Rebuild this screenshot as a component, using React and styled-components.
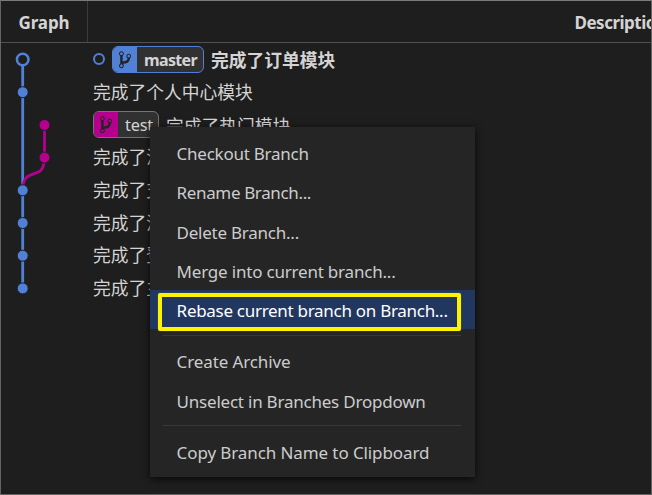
import React from 'react';
import styled, { createGlobalStyle, css } from 'styled-components';

const Global = createGlobalStyle`
  *{box-sizing:border-box}
  body{margin:0;background:#1e1e1e;overflow:hidden}
`;
const Page = styled.main`
  position:relative;width:652px;height:495px;overflow:hidden;
  background:#1e1e1e;color:#d4d4d4;border:1px solid #636463;border-top-color:#7a7c7a;
  font-family:"Noto Sans","Noto Sans CJK SC",sans-serif;font-size:17px;
`;
const Header = styled.header`
  display:flex;height:42px;border-bottom:1px solid #4f504f;font-weight:700;line-height:43px;
`;
const GraphHead = styled.div`
  width:87px;border-right:1px solid #3b3b3b;text-align:center;letter-spacing:-0.15px;
`;
const DescHead = styled.div`
  flex:1;padding-left:486.5px;white-space:nowrap;overflow:hidden;letter-spacing:-0.5px;
`;
const Body = styled.div`display:flex;`;
const Graph = styled.svg`width:92px;height:262px;flex:none;display:block;`;
const Commits = styled.div`flex:1;`;
const Commit = styled.div`
  display:flex;align-items:center;height:32.7px;white-space:nowrap;
  font-weight:${p => (p.$head ? 700 : 400)};
`;
const Message = styled.span`
  font-family:"Noto Sans CJK SC",sans-serif;font-size:17.75px;line-height:30px;
  padding-bottom:${p => (p.$raised ? 2 : 0)}px;
`;
const HeadDot = styled.span`
  width:12px;height:12px;border:2px solid #5180d7;border-radius:50%;margin-right:7px;
`;
const Ref = styled.span`
  display:flex;height:27px;width:${p => p.$w}px;margin-right:7px;overflow:hidden;
  border:1px solid ${p => p.$border};border-radius:6px;background:#313131;
`;
const RefIcon = styled.span`
  width:24px;flex:none;display:grid;place-items:center;background:${p => p.$c};color:#232323;
`;
const RefName = styled.span`
  flex:1;padding-left:7px;line-height:27px;font-size:${p => (p.$head ? 16 : 16.3)}px;letter-spacing:${p => p.$ls}px;
`;
const Menu = styled.nav`
  position:absolute;left:149px;top:126px;width:325px;height:350px;padding-top:6px;
  background:#252526;box-shadow:0 2px 8px rgba(0,0,0,.75);
`;
const Item = styled.div`
  height:39.3px;line-height:${p => p.$lh || 41}px;padding-left:26.6px;white-space:nowrap;color:#ccc;
  letter-spacing:${p => p.$ls}px;
  ${p => p.$active && css`background:#22375f;color:#fff;`}
`;
const Separator = styled.div`
  height:1px;margin:${p => p.$top}px 14px ${p => p.$bottom}px 13px;background:#383839;
`;
const Highlight = styled.div`
  position:absolute;left:8px;top:166px;width:303px;height:38px;border:4px solid #fff200;border-radius:2px;
  box-shadow:0 0 1px #b8ae00;
`;

const Branch = () => (
  <svg width="12.2" height="19.5" viewBox="0 0 10 16" fill="currentColor">
    <path fillRule="evenodd" d="M10 5c0-1.11-.89-2-2-2a1.993 1.993 0 00-1 3.72v.3c-.02.52-.23.98-.63 1.38-.4.4-.86.61-1.38.63-.83.02-1.48.16-2 .45V4.72a1.993 1.993 0 00-1-3.72C.88 1 0 1.89 0 3a2 2 0 001 1.72v6.56c-.59.35-1 .99-1 1.72 0 1.11.89 2 2 2 1.11 0 2-.89 2-2 0-.53-.2-1-.53-1.36.09-.06.48-.41.59-.47.25-.11.56-.17.94-.17 1.05-.05 1.95-.45 2.75-1.25S8.95 7.77 9 6.73h-.02C9.59 6.37 10 5.73 10 5zM2 1.8c.66 0 1.2.55 1.2 1.2 0 .65-.55 1.2-1.2 1.2C1.35 4.2.8 3.65.8 3c0-.65.55-1.2 1.2-1.2zm0 12.41c-.66 0-1.2-.55-1.2-1.2 0-.65.55-1.2 1.2-1.2.65 0 1.2.55 1.2 1.2 0 .65-.55 1.2-1.2 1.2zm6-8c-.66 0-1.2-.55-1.2-1.2 0-.65.55-1.2 1.2-1.2.65 0 1.2.55 1.2 1.2 0 .65-.55 1.2-1.2 1.2z" />
  </svg>
);

const commits = ['完成了个人中心模块', null, '完成了消息模块', '完成了支付模块', '完成了消息模块', '完成了登录模块', '完成了主页模块'];
const dots = [49.2, 147.3, 180, 212.7, 245.4];

export default function App() {
  return (
    <Page>
      <Global />
      <Header><GraphHead>Graph</GraphHead><DescHead>Description</DescHead></Header>
      <Body>
        <Graph viewBox="0 0 92 262" fill="none">
          <path d="M21.7 17V245" stroke="#5180d7" strokeWidth="2.8" />
          <path d="M43.5 82V114.6C43.5 140.8 21.7 121.1 21.7 147.3" stroke="#b5008f" strokeWidth="2.8" />
          {dots.map(y => <circle key={y} cx="21.7" cy={y} r="5.5" fill="#5180d7" stroke="#1e1e1e" />)}
          <circle cx="43.5" cy="82" r="5.5" fill="#b5008f" stroke="#1e1e1e" />
          <circle cx="43.5" cy="114.6" r="5.5" fill="#b5008f" stroke="#1e1e1e" />
          <circle cx="21.7" cy="16.5" r="5.8" fill="#1e1e1e" stroke="#5180d7" strokeWidth="2.5" />
        </Graph>
        <Commits>
          <Commit $head>
            <HeadDot />
            <Ref $w={92} $border="#5180d7">
              <RefIcon $c="#5180d7"><Branch /></RefIcon><RefName $head $ls={-0.65}>master</RefName>
            </Ref>
            <Message>完成了订单模块</Message>
          </Commit>
          {commits.map((text, i) => text ? (
            <Commit key={i}><Message $raised>{text}</Message></Commit>
          ) : (
            <Commit key={i}>
              <Ref $w={66} $border="#737373">
                <RefIcon $c="#b5008f"><Branch /></RefIcon><RefName $ls={-0.2}>test</RefName>
              </Ref>
              <Message>完成了热门模块</Message>
            </Commit>
          ))}
        </Commits>
      </Body>
      <Menu>
        <Item $ls={-0.25}>Checkout Branch</Item>
        <Item $ls={-0.36}>Rename Branch...</Item>
        <Item $ls={-0.24}>Delete Branch...</Item>
        <Item $ls={-0.2}>Merge into current branch...</Item>
        <Item $active $ls={-0.29}>Rebase current branch on Branch...</Item>
        <Separator $top={5.5} $bottom={6} />
        <Item $ls={-0.12} $lh={39}>Create Archive</Item>
        <Item $ls={-0.22}>Unselect in Branches Dropdown</Item>
        <Separator $top={4} $bottom={7} />
        <Item $ls={-0.1} $lh={39}>Copy Branch Name to Clipboard</Item>
        <Highlight />
      </Menu>
    </Page>
  );
}
